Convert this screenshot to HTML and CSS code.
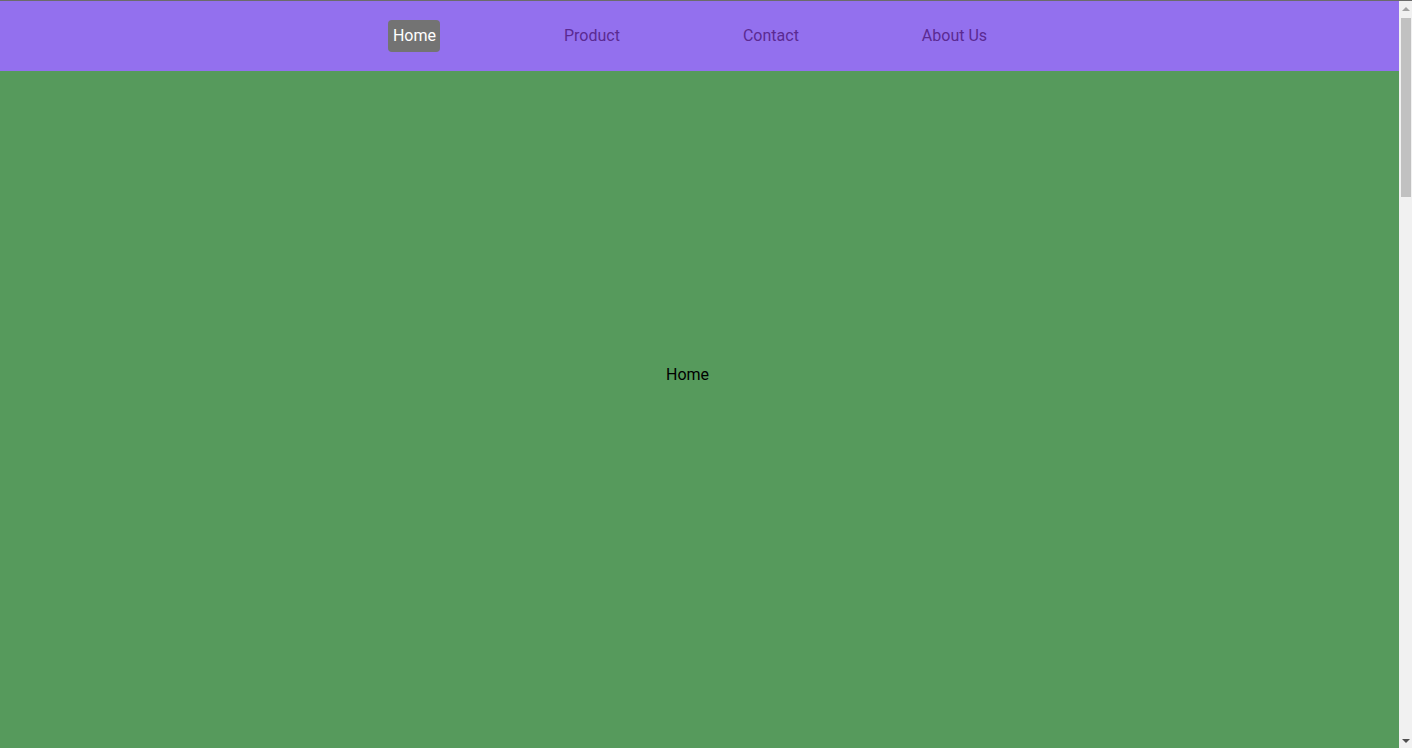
FILE: index.html
```html
<!DOCTYPE html>
<html lang="en">
<head>
<meta charset="utf-8">
<title>Home</title>
<link rel="stylesheet" href="styles.css">
</head>
<body>
<div class="page">
  <nav class="topbar">
    <a class="nav-link active" href="#home">Home</a>
    <a class="nav-link" href="#product">Product</a>
    <a class="nav-link" href="#contact">Contact</a>
    <a class="nav-link" href="#about">About Us</a>
  </nav>
  <main class="panel panel-home" id="home">Home</main>
</div>
<div class="scrollbar" aria-hidden="true">
  <div class="sb-btn"><span class="sb-arrow sb-up"></span></div>
  <div class="sb-track"><div class="sb-thumb"></div></div>
  <div class="sb-btn"><span class="sb-arrow sb-down"></span></div>
</div>
</body>
</html>
```
FILE: styles.css
```css
html, body {
  margin: 0;
  padding: 0;
}
body {
  height: 100vh;
  box-sizing: border-box;
  border-top: 1px solid #6b6b6b;
  overflow: hidden;
  display: flex;
  font-family: Roboto, "Liberation Sans", sans-serif;
  font-size: 16px;
  color: #000;
}
.page {
  flex: 1;
  min-width: 0;
  display: flex;
  flex-direction: column;
}
.topbar {
  height: 70px;
  flex: none;
  background: #9370ee;
  display: flex;
  align-items: center;
  justify-content: center;
  gap: 113px;
  padding-right: 19px;
}
.nav-link {
  text-decoration: none;
  color: #5b2a92;
  padding: 6px 5px;
  line-height: 20px;
  border-radius: 4px;
}
.nav-link.active {
  background: #737373;
  color: #fff;
  padding: 6px 4px 6px 5px;
  margin-right: 6px;
}
.panel {
  flex: 1;
  display: flex;
  align-items: center;
  justify-content: center;
  padding-right: 24px;
  padding-bottom: 71px;
}
.panel-home { background: #569a5c; }

.scrollbar {
  width: 13px;
  flex: none;
  background: #f1f1f1;
  display: flex;
  flex-direction: column;
}
.sb-btn {
  height: 16px;
  flex: none;
  display: flex;
  align-items: center;
  justify-content: center;
}
.sb-arrow {
  width: 0;
  height: 0;
  border-left: 4px solid transparent;
  border-right: 4px solid transparent;
}
.sb-up {
  border-bottom: 4px solid #a3a3a3;
  margin-top: -1px;
}
.sb-down {
  border-top: 4px solid #505050;
  margin-top: 1px;
}
.sb-track {
  flex: 1;
  padding: 1px 1px 0 2px;
}
.sb-thumb {
  height: 179px;
  background: #c1c1c1;
}
```
